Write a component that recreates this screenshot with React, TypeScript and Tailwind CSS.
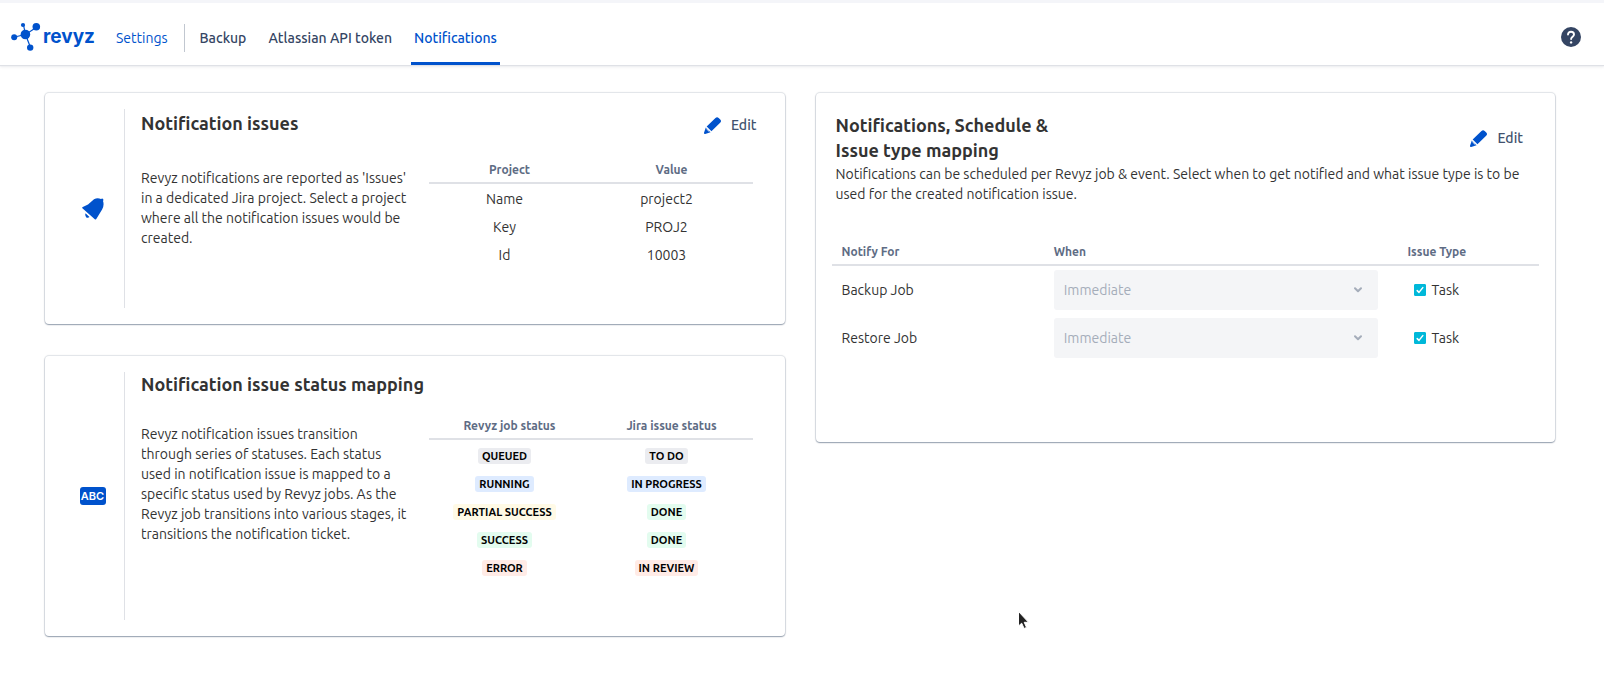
import React, { useState } from 'react';

const tabs = ['Backup', 'Atlassian API token', 'Notifications'];

const projectRows = [
    { name: 'Name', value: 'project2' },
    { name: 'Key', value: 'PROJ2' },
    { name: 'Id', value: '10003' },
];

const statusRows = [
    { job: 'QUEUED', jira: 'TO DO', color: 'bg-[#ebecf0]' },
    { job: 'RUNNING', jira: 'IN PROGRESS', color: 'bg-[#deebff]' },
    { job: 'PARTIAL SUCCESS', jira: 'DONE', color: 'bg-[#fffae6]', jiraColor: 'bg-[#e3fcef]' },
    { job: 'SUCCESS', jira: 'DONE', color: 'bg-[#e3fcef]' },
    { job: 'ERROR', jira: 'IN REVIEW', color: 'bg-[#ffebe6]' },
];

const jobs = ['Backup Job', 'Restore Job'];

function Logo() {
    return (
        <a href="#" className="flex items-center gap-[2px] text-[#0052cc]">
            <svg width="30" height="30" viewBox="0 0 30 30" fill="currentColor">
                <path d="M3.5 15 14.5 12.5 26 5M12.5 3 14.5 12.5 19.5 25.5" stroke="currentColor" strokeWidth="1.2" fill="none" />
                <circle cx="3.2" cy="15.2" r="3" />
                <circle cx="14.4" cy="12.5" r="4.8" />
                <circle cx="25.3" cy="4.7" r="3.8" />
                <circle cx="12" cy="3" r="2.1" />
                <circle cx="19.2" cy="25.6" r="3.2" />
            </svg>
            <span className="font-['Inter',sans-serif] text-[19px] leading-6 font-bold">revyz</span>
        </a>
    );
}

function EditButton() {
    return (
        <button type="button" className="flex h-8 shrink-0 items-center gap-[10px] px-3 font-medium text-[#42526e]">
            <svg width="17" height="17" viewBox="0 0 16 16" fill="#0052cc">
                <path d="M10.8 1a2.3 2.3 0 0 1 3-.1l1.5 1.5a2 2 0 0 1-.1 2.9L7 13.4 2.5 8.9z" />
                <path d="M1.7 9.8 6.2 14.3 1.1 15.9q-1.3.2-1.1-1.1z" />
                <path d="M2.2 11 5 13.8" stroke="#fff" strokeWidth=".9" />
            </svg>
            Edit
        </button>
    );
}

function Card({ className = '', children }: { className?: string; children: React.ReactNode }) {
    return (
        <section className={`rounded bg-white p-4 shadow-[0_1px_1px_rgba(9,30,66,0.25),0_1px_2px_rgba(9,30,66,0.12),0_0_1px_1px_rgba(9,30,66,0.12)] ${className}`}>
            {children}
        </section>
    );
}

function Lozenge({ color, children }: { color: string; children: React.ReactNode }) {
    return (
        <span className={`inline-block h-4 rounded-[3px] px-1 text-[11px] leading-4 font-bold text-black ${color}`}>{children}</span>
    );
}

function TwoColTable({ heads, rows }: { heads: string[]; rows: React.ReactNode[][] }) {
    return (
        <table className="w-[324px] shrink-0 table-fixed self-start text-center">
            <thead className="border-b-2 border-[#dfe1e6] text-xs text-[#5e6c84]">
                <tr>
                    {heads.map(h => (
                        <th key={h} className="h-[30px] pt-1 font-bold">{h}</th>
                    ))}
                </tr>
            </thead>
            <tbody>
                {rows.map((row, i) => (
                    <tr key={i}>
                        {row.map((cell, j) => (
                            <td key={j} className={`pr-[10px] ${i === 0 ? 'h-[30px]' : 'h-7'}`}>{cell}</td>
                        ))}
                    </tr>
                ))}
            </tbody>
        </table>
    );
}

export default function App() {
    const [checked, setChecked] = useState<Record<string, boolean>>({ 'Backup Job': true, 'Restore Job': true });

    return (
        <div className="min-h-screen bg-white font-['Ubuntu','Noto_Sans',sans-serif] text-sm leading-5 text-[#333]">
            <header className="flex h-[65px] items-stretch border-t-[3px] border-[#f4f5f9] pr-[23px] pl-[11px] shadow-[0_1px_1px_#dfe1e6,0_2px_3px_rgba(9,30,66,0.08)]">
                <div className="flex items-center pt-[6px]">
                    <Logo />
                </div>
                <div className="flex items-center pt-2 pl-[21px]">
                    <a href="#" className="pr-4 text-[#0052cc]">Settings</a>
                    <span className="h-7 w-px bg-[#c1c7d0]" />
                </div>
                <nav className="flex gap-4 pl-3">
                    {tabs.map(tab => (
                        <a
                            key={tab}
                            href="#"
                            className={`flex items-center border-b-[3px] px-[3px] pt-[11px] font-medium ${tab === 'Notifications' ? 'border-[#0052cc] text-[#0052cc]' : 'border-transparent text-[#344563]'}`}
                        >
                            {tab}
                        </a>
                    ))}
                </nav>
                <button type="button" aria-label="Help" className="ml-auto pt-[6px]">
                    <svg width="20" height="20" viewBox="0 0 20 20">
                        <circle cx="10" cy="10" r="10" fill="#344563" />
                        <path d="M7 7.6C7 5.8 8.3 4.8 10 4.8s3 1.1 3 2.7c0 2.2-2.9 2.3-2.9 4.6" fill="none" stroke="#fff" strokeWidth="1.9" strokeLinecap="round" />
                        <circle cx="10.1" cy="15.4" r="1.2" fill="#fff" />
                    </svg>
                </button>
            </header>

            <main className="grid grid-cols-2 items-start gap-x-[31px] pt-7 pr-[49px] pb-10 pl-[45px]">
                <div className="flex flex-col gap-8">
                    <Card className="flex min-h-[231px]">
                        <div className="flex w-16 shrink-0 items-center justify-center border-r border-[#dfe1e6]">
                            <svg width="22" height="22" viewBox="0 0 22 22" fill="#0052cc">
                                <path d="M.4 10.2Q-.2 9.5.8 9L6 6.6 12 1.2Q15.5-.8 19 1q1.4-.8 2.1.1.6.8-.1 1.9 1.5 4-.9 8.5L14.6 20.5Q13.8 22 12.8 21.3z" />
                                <path d="M3.5 15.2 7.5 19q-1.6 1.5-3.4.2-1.6-1.8-.6-4z" />
                            </svg>
                        </div>
                        <div className="min-w-0 flex-1 pl-4">
                            <div className="flex items-start justify-between">
                                <h2 className="pt-[2px] text-lg leading-[25px] font-bold">Notification issues</h2>
                                <EditButton />
                            </div>
                            <div className="flex gap-[18px] pt-3 pr-4">
                                <p className="min-w-0 flex-1 pt-[15px]">
                                    Revyz notifications are reported as 'Issues' in a dedicated Jira project. Select a project where all the notification issues would be created.
                                </p>
                                <TwoColTable heads={['Project', 'Value']} rows={projectRows.map(r => [r.name, r.value])} />
                            </div>
                        </div>
                    </Card>

                    <Card className="flex min-h-[280px]">
                        <div className="flex w-16 shrink-0 items-center justify-center border-r border-[#dfe1e6]">
                            <span className="flex h-[18px] w-[26px] items-center justify-center rounded-[3px] bg-[#0052cc] font-['Inter',sans-serif] text-[11px] font-semibold text-white">ABC</span>
                        </div>
                        <div className="min-w-0 flex-1 pl-4">
                            <h2 className="text-lg leading-[25px] font-bold">Notification issue status mapping</h2>
                            <div className="flex gap-[18px] pt-3 pr-4">
                                <p className="min-w-0 flex-1 pt-[15px]">
                                    Revyz notification issues transition through series of statuses. Each status used in notification issue is mapped to a specific status used by Revyz jobs. As the Revyz job transitions into various stages, it transitions the notification ticket.
                                </p>
                                <TwoColTable
                                    heads={['Revyz job status', 'Jira issue status']}
                                    rows={statusRows.map(r => [
                                        <Lozenge color={r.color}>{r.job}</Lozenge>,
                                        <Lozenge color={r.jiraColor ?? r.color}>{r.jira}</Lozenge>,
                                    ])}
                                />
                            </div>
                        </div>
                    </Card>
                </div>

                <Card className="min-h-[349px]">
                    <div className="flex items-center justify-between px-1 pt-1">
                        <h2 className="text-lg leading-[25px] font-bold">
                            Notifications, Schedule &<br />Issue type mapping
                        </h2>
                        <EditButton />
                    </div>
                    <p className="px-1 pt-px">
                        Notifications can be scheduled per Revyz job & event. Select when to get notified and what issue type is to be used for the created notification issue.
                    </p>
                    <table className="mt-[31px] w-full table-fixed text-left">
                        <thead className="border-b-2 border-[#dfe1e6] text-xs text-[#5e6c84]">
                            <tr>
                                <th className="h-[30px] w-[30%] px-[10px] pt-1 font-bold">Notify For</th>
                                <th className="w-1/2 px-[10px] pt-1 font-bold">When</th>
                                <th className="w-1/5 px-[10px] pt-1 font-bold">Issue Type</th>
                            </tr>
                        </thead>
                        <tbody>
                            {jobs.map(job => (
                                <tr key={job}>
                                    <td className="px-[10px]">{job}</td>
                                    <td className="py-1 pr-5 pl-[10px]">
                                        <div className="grid items-center">
                                            <select disabled aria-label={`${job} schedule`} className="col-start-1 row-start-1 h-10 w-full appearance-none rounded-[3px] bg-[#f4f5f7] px-[10px] text-[#a5adba] opacity-100">
                                                <option>Immediate</option>
                                            </select>
                                            <svg className="col-start-1 row-start-1 mr-4 justify-self-end" width="8" height="6" viewBox="0 0 8 6" fill="none" stroke="#a5adba" strokeWidth="2" strokeLinecap="round" strokeLinejoin="round">
                                                <path d="M1 1.2 4 4.2 7 1.2" />
                                            </svg>
                                        </div>
                                    </td>
                                    <td className="px-4">
                                        <label className="flex items-center gap-[6px]">
                                            <span className="grid items-center">
                                                <input
                                                    type="checkbox"
                                                    checked={checked[job]}
                                                    onChange={e => setChecked({ ...checked, [job]: e.target.checked })}
                                                    className="col-start-1 row-start-1 size-3 appearance-none rounded-[1px] border border-[#00b8d9] checked:bg-[#00b8d9]"
                                                />
                                                <svg className="pointer-events-none col-start-1 row-start-1" width="12" height="12" viewBox="0 0 12 12" fill="none" stroke="#fff" strokeWidth="1.5" strokeLinecap="round" strokeLinejoin="round">
                                                    <path d="M3.2 6.6 5 8.4 8.8 3.6" />
                                                </svg>
                                            </span>
                                            Task
                                        </label>
                                    </td>
                                </tr>
                            ))}
                        </tbody>
                    </table>
                </Card>
            </main>

            {/* mouse pointer */}
            <svg className="pointer-events-none absolute top-[610px] left-[1017px]" width="14" height="21" viewBox="0 0 14 21">
                <path d="M1.5 1.5v14.5l3.2-2.8 2.4 5.3 2.4-1.1-2.3-5.1h4.3z" fill="#222" stroke="#fff" strokeWidth="1" />
            </svg>
        </div>
    );
}
